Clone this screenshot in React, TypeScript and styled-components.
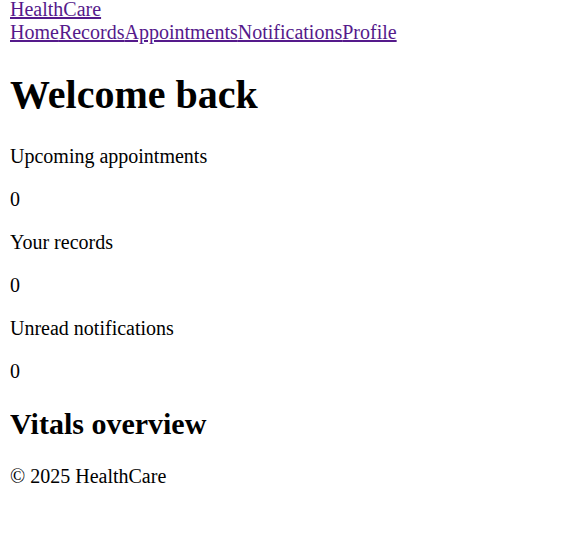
import * as React from "react";
import styled, { createGlobalStyle } from "styled-components";

const GlobalStyle = createGlobalStyle`
  html, body {
    margin: 0;
    padding: 0;
    background: #fff;
  }
  body {
    margin: -2px 10px 0;
    font-family: "Liberation Serif", "Times New Roman", serif;
    font-size: 20px;
    color: #000;
  }
`;

const Header = styled.header`
  display: block;
`;

const Brand = styled.div`
  display: block;
`;

const Nav = styled.nav`
  display: block;
`;

const Link = styled.a`
  color: #551a8b;
  text-decoration: underline;
  cursor: pointer;
`;

const Title = styled.h1`
  font-size: 40px;
  font-weight: bold;
  margin: 26.8px 0;
`;

const Stat = styled.section`
  display: block;
`;

const Para = styled.p`
  margin: 20px 0;
`;

const SectionTitle = styled.h2`
  font-size: 30px;
  font-weight: bold;
  margin: 24px 0;
`;

const Footer = styled.footer`
  display: block;
`;

const links = ["Home", "Records", "Appointments", "Notifications", "Profile"];

const stats = [
  { label: "Upcoming appointments", value: 0 },
  { label: "Your records", value: 0 },
  { label: "Unread notifications", value: 0 }
];

export default function App() {
  return (
    <>
      <GlobalStyle />
      <Header>
        <Brand>
          <Link href="#">HealthCare</Link>
        </Brand>
        <Nav>
          {links.map(l => (
            <Link key={l} href="#">
              {l}
            </Link>
          ))}
        </Nav>
      </Header>
      <main>
        <Title>Welcome back</Title>
        {stats.map(s => (
          <Stat key={s.label}>
            <Para>{s.label}</Para>
            <Para>{s.value}</Para>
          </Stat>
        ))}
        <section>
          <SectionTitle>Vitals overview</SectionTitle>
        </section>
      </main>
      <Footer>
        <Para>© 2025 HealthCare</Para>
      </Footer>
    </>
  );
}
